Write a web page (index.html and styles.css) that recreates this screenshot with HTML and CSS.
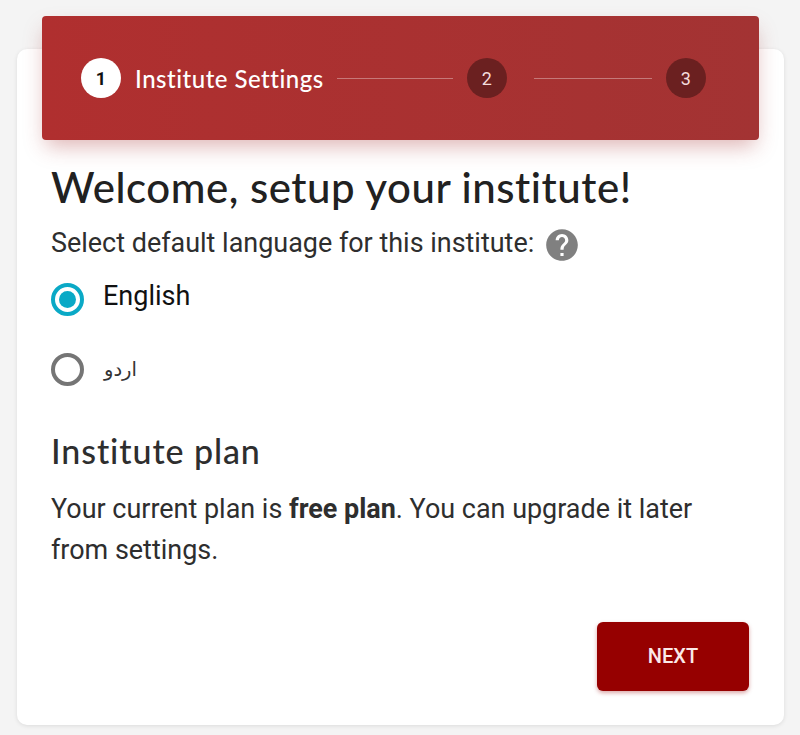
FILE: index.html
```html
<!DOCTYPE html>
<html lang="en">
<head>
<meta charset="utf-8">
<title>Setup</title>
<link rel="stylesheet" href="styles.css">
</head>
<body>
<main class="card">
  <header class="stepper">
    <span class="step-num step-num-active">1</span>
    <span class="step-label">Institute Settings</span>
    <span class="step-line step-line-first"></span>
    <span class="step-num">2</span>
    <span class="step-line step-line-second"></span>
    <span class="step-num">3</span>
  </header>
  <section class="content">
    <h1 class="title">Welcome, setup your institute!</h1>
    <div class="lang-prompt">
      <span>Select default language for this institute:</span>
      <svg class="help" width="38" height="38" viewBox="0 0 24 24" aria-hidden="true"><path fill="#808080" d="M12 2C6.48 2 2 6.48 2 12s4.48 10 10 10 10-4.48 10-10S17.52 2 12 2zm1 17h-2v-2h2v2zm2.07-7.75l-.9.92C13.45 12.9 13 13.5 13 15h-2v-.5c0-1.1.45-2.1 1.17-2.83l1.24-1.26c.37-.36.59-.86.59-1.41 0-1.1-.9-2-2-2s-2 .9-2 2H8c0-2.21 1.79-4 4-4s4 1.79 4 4c0 .88-.36 1.68-.93 2.25z"/></svg>
    </div>
    <div class="radio-row">
      <span class="radio radio-on"><span class="radio-dot"></span></span>
      <span class="radio-label">English</span>
    </div>
    <div class="radio-row radio-row-second">
      <span class="radio"></span>
      <span class="radio-label radio-label-urdu" lang="ur" dir="rtl">اردو</span>
    </div>
    <h2 class="subtitle">Institute plan</h2>
    <p class="plan">Your current plan is <strong>free plan</strong>. You can upgrade it later from settings.</p>
    <div class="actions"><button class="next" type="button">NEXT</button></div>
  </section>
</main>
</body>
</html>
```

FILE: styles.css
```css
* { box-sizing: border-box; }
html, body { margin: 0; height: 735px; overflow: hidden; }
body {
  background: #f4f4f4;
  padding: 49px 16px 10px 17px;
  font-family: Roboto, sans-serif;
  color: #2e2e2e;
}
.card {
  height: 676px;
  background: #fff;
  border-radius: 10px;
  box-shadow: 0 1px 4px rgba(0,0,0,.1);
  padding: 0 25px;
}
.stepper {
  height: 124px;
  position: relative;
  top: -33px;
  margin-bottom: -33px;
  display: flex;
  align-items: center;
  padding: 0 52px 0 39px;
  background: linear-gradient(90deg, #b02f2f, #a33333);
  border-radius: 4px;
  box-shadow: 0 10px 20px -4px rgba(160,40,40,.35);
  color: #fff;
}
.step-num {
  width: 40px;
  height: 40px;
  flex: none;
  border-radius: 50%;
  background: #6b2020;
  color: #f5dcdc;
  display: flex;
  align-items: center;
  justify-content: center;
  font-size: 18px;
}
.step-num-active { background: #fff; color: #111; font-weight: 700; }
.step-label {
  margin-left: 14px;
  font-family: Lato, sans-serif;
  font-size: 24px;
  font-weight: 500;
  letter-spacing: .5px;
  white-space: nowrap;
}
.step-line { height: 1px; background: rgba(255,255,255,.35); flex: none; }
.step-line-first { width: 116px; margin: 0 14px 0 13px; }
.step-line-second { width: 118px; margin: 0 14px 0 27px; }
.content { padding: 0 10px 0 9px; }
.title {
  margin: 24px 0 0;
  font-family: Lato, sans-serif;
  font-size: 42px;
  line-height: 46px;
  font-weight: 500;
  letter-spacing: .52px;
  color: #212121;
  white-space: nowrap;
}
.lang-prompt {
  display: flex;
  align-items: center;
  gap: 9px;
  margin-top: 15px;
  height: 36px;
  font-size: 26.95px;
}
.help { flex: none; margin-top: 4px; }
.radio-row { display: flex; align-items: center; gap: 19px; margin-top: 18px; height: 40px; }
.radio-row-second { margin-top: 30px; }
.radio {
  width: 33px;
  height: 33px;
  border: 4px solid #757575;
  border-radius: 50%;
  display: flex;
  align-items: center;
  justify-content: center;
  flex: none;
}
.radio-on { border-color: #0aa9c6; }
.radio-dot { width: 17px; height: 17px; border-radius: 50%; background: #0aa9c6; }
.radio-label { font-size: 27px; color: #111; margin-top: -6px; }
.radio-label-urdu { font-family: "DejaVu Sans", sans-serif; font-size: 19.5px; color: #333; margin: 0 0 0 1px; }
.subtitle {
  margin: 42px 0 0;
  font-family: Lato, sans-serif;
  font-size: 34px;
  line-height: 40px;
  font-weight: 500;
  letter-spacing: .9px;
  color: #2e2e2e;
}
.plan { margin: 18px 0 0; font-size: 26.95px; line-height: 41px; }
.actions { display: flex; justify-content: flex-end; margin-top: 51px; }
.next {
  width: 152px;
  height: 69px;
  border: 0;
  border-radius: 6px;
  background: #960000;
  color: #fbe9e9;
  font-family: Roboto, sans-serif;
  font-size: 20px;
  font-weight: 500;
  padding-bottom: 3px;
  box-shadow: 0 2px 4px rgba(150,0,0,.35);
}
```
